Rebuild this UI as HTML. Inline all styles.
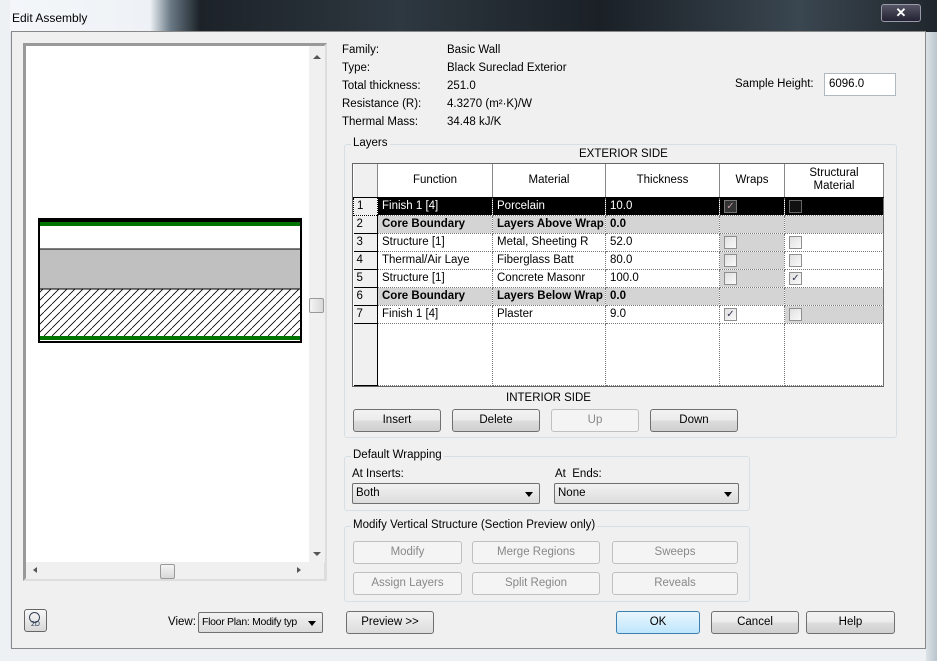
<!DOCTYPE html>
<html><head><meta charset="utf-8"><style>
*{box-sizing:border-box;margin:0;padding:0}
body{width:937px;height:661px;overflow:hidden;font-family:"Liberation Sans",sans-serif;font-size:11.5px;color:#000;background:#dfe6ee;position:relative}
.a{position:absolute;white-space:nowrap}
.btn{position:absolute;height:23px;border:1px solid #707070;border-radius:3px;background:linear-gradient(#f2f2f2 0%,#ebebeb 50%,#dddddd 51%,#cfcfcf 100%);text-align:center;line-height:21px}
.dis{border-color:#c0c0c0;background:#f4f4f4;color:#888}
.grp{position:absolute;border:1px solid #d5dfe5;border-radius:3px}
.gl{position:absolute;top:-8px;left:6px;background:#f0f0f0;padding:0 2px}
.cb{position:absolute;width:13px;height:13px;border:1px solid #8e8f8f;background:linear-gradient(135deg,#e0e0e0,#fafafa)}
.sel{position:absolute;height:21px;border:1px solid #707070;border-radius:2px;background:linear-gradient(#f2f2f2,#dcdcdc);padding-left:3px;line-height:19px}
.sel:after{content:"";position:absolute;right:6px;top:8px;border-left:4px solid transparent;border-right:4px solid transparent;border-top:5px solid #000}
table{border-collapse:collapse;position:absolute;left:353px;top:164px;width:530px;table-layout:fixed}
td{height:18px;border-right:1px dotted #777;border-bottom:1px dotted #777;padding-left:4px;white-space:nowrap;overflow:hidden;line-height:17px}
tr.b td{font-weight:bold;background:#d4d4d4}
tr.k td{background:#000;color:#fff}
td.g{background:#d4d4d4}
table tr td.h{border-right:1px solid #000;border-bottom:1px solid #000;background:#f0f0f0;padding-left:3px;font-weight:normal;color:#000}
th{font-weight:normal;height:33px;border-right:1px solid #888;border-bottom:1px solid #000;background:#fff;line-height:13px}
</style></head><body>
<div class="a" style="left:0;top:0;width:937px;height:32px;background:linear-gradient(90deg,#f4f7fa 0,#eef2f6 150px,#6c7c88 170px,#1c2228 200px,#2e3840 400px,#1a2026 600px,#3a4650 800px,#20262c 937px)"></div>
<div class="a" style="left:0;top:0;width:10px;height:661px;background:#eef1f4"></div>
<div class="a" style="left:0;top:648px;width:937px;height:13px;background:#eef1f4"></div>
<div class="a" style="left:926px;top:32px;width:11px;height:629px;background:linear-gradient(90deg,#dde3e8,#b9c4cc)"></div>
<div class="a" style="left:12px;top:11px;font-size:12px">Edit Assembly</div>
<div class="a" style="left:881px;top:4px;width:40px;height:18px;border:1px solid #99a;border-radius:3px;background:linear-gradient(#556,#223);color:#fff;text-align:center;font-weight:bold;line-height:16px;font-size:13px">✕</div>
<div class="a" style="left:11px;top:31px;width:915px;height:618px;background:#f0f0f0;border:1px solid #888"></div>
<div class="a" style="left:23px;top:43px;width:304px;height:538px;border:3px solid #999;border-right-color:#ddd;border-bottom-color:#ddd;background:#fff"></div>
<div class="a" style="left:309px;top:46px;width:16px;height:516px;background:#f0f0f0"></div>
<div class="a" style="left:313px;top:55px;border:4px solid transparent;border-bottom:4px solid #555;border-top:none"></div>
<div class="a" style="left:313px;top:552px;border:4px solid transparent;border-top:4px solid #555;border-bottom:none"></div>
<div class="a" style="left:309px;top:298px;width:15px;height:15px;border:1px solid #999;border-radius:2px;background:linear-gradient(90deg,#f4f4f4,#d8d8d8)"></div>
<div class="a" style="left:26px;top:562px;width:298px;height:17px;background:#f0f0f0"></div>
<div class="a" style="left:33px;top:567px;border:3px solid transparent;border-right:4px solid #555;border-left:none"></div>
<div class="a" style="left:297px;top:567px;border:3px solid transparent;border-left:4px solid #555;border-right:none"></div>
<div class="a" style="left:160px;top:564px;width:15px;height:15px;border:1px solid #999;border-radius:2px;background:linear-gradient(#f4f4f4,#d8d8d8)"></div>
<svg class="a" style="left:36px;top:216px" width="268" height="130">
<defs><pattern id="h" width="8" height="8" patternUnits="userSpaceOnUse"><path d="M0 8L8 0" stroke="#000" stroke-width="0.8"/></pattern></defs>
<rect x="3" y="2" width="262" height="124" fill="#fff"/>
<rect x="3" y="33" width="262" height="40" fill="#c0c0c0"/>
<rect x="3" y="73" width="262" height="47" fill="url(#h)"/>
<rect x="2" y="2" width="264" height="4" fill="#000"/>
<rect x="2" y="6" width="264" height="4" fill="#007400"/>
<rect x="2" y="120" width="264" height="4" fill="#007400"/>
<line x1="3" y1="33" x2="265" y2="33" stroke="#000"/>
<line x1="3" y1="73" x2="265" y2="73" stroke="#000"/>
<rect x="3" y="3" width="262" height="123" fill="none" stroke="#000" stroke-width="2"/>
</svg>
<div class="a" style="left:342px;top:41px;line-height:18px">Family:<br>Type:<br>Total thickness:<br>Resistance (R):<br>Thermal Mass:</div>
<div class="a" style="left:447px;top:41px;line-height:18px">Basic Wall<br>Black Sureclad Exterior<br>251.0<br>4.3270 (m²·K)/W<br>34.48 kJ/K</div>
<div class="a" style="left:735px;top:78px">Sample Height:</div>
<div class="a" style="left:824px;top:73px;width:72px;height:23px;border:1px solid #b0b8c0;background:#fff;padding:4px 4px">6096.0</div>
<div class="grp" style="left:344px;top:144px;width:553px;height:294px"><span class="gl">Layers</span></div>
<div class="a" style="left:579px;top:148px">EXTERIOR SIDE</div>
<div class="a" style="left:352px;top:163px;width:532px;height:224px;border:1px solid #666;background:#fff"></div>
<table>
<colgroup><col style="width:24px"><col style="width:115px"><col style="width:113px"><col style="width:114px"><col style="width:65px"><col style="width:99px"></colgroup>
<tr><th style="background:#f0f0f0"></th><th>Function</th><th>Material</th><th>Thickness</th><th>Wraps</th><th>Structural<br>Material</th></tr>
<tr class="k"><td class="h" style="border:1px dotted #000">1</td><td>Finish 1 [4]</td><td>Porcelain</td><td>10.0</td><td></td><td></td></tr>
<tr class="b"><td class="h">2</td><td>Core Boundary</td><td>Layers Above Wrap</td><td>0.0</td><td></td><td></td></tr>
<tr><td class="h">3</td><td>Structure [1]</td><td>Metal, Sheeting R</td><td>52.0</td><td class="g"></td><td></td></tr>
<tr><td class="h">4</td><td>Thermal/Air Laye</td><td>Fiberglass Batt</td><td>80.0</td><td class="g"></td><td></td></tr>
<tr><td class="h">5</td><td>Structure [1]</td><td>Concrete Masonr</td><td>100.0</td><td class="g"></td><td></td></tr>
<tr class="b"><td class="h">6</td><td>Core Boundary</td><td>Layers Below Wrap</td><td>0.0</td><td></td><td></td></tr>
<tr><td class="h">7</td><td>Finish 1 [4]</td><td>Plaster</td><td>9.0</td><td></td><td class="g"></td></tr>
<tr><td class="h" style="height:62px"></td><td style="height:62px"></td><td></td><td></td><td></td><td></td></tr>
</table>
<div class="cb" style="left:724px;top:200px;background:#333;border-color:#777;color:#b9a;font-size:10px;line-height:11px;text-align:center">✓</div>
<div class="cb" style="left:789px;top:200px;background:#111;border-color:#666"></div>
<div class="cb" style="left:724px;top:236px"></div><div class="cb" style="left:789px;top:236px"></div>
<div class="cb" style="left:724px;top:254px"></div><div class="cb" style="left:789px;top:254px"></div>
<div class="cb" style="left:724px;top:272px"></div><div class="cb" style="left:789px;top:272px;color:#335;font-size:10px;line-height:11px;text-align:center">✓</div>
<div class="cb" style="left:724px;top:308px;color:#335;font-size:10px;line-height:11px;text-align:center">✓</div><div class="cb" style="left:789px;top:308px"></div>
<div class="a" style="left:506px;top:392px">INTERIOR SIDE</div>
<div class="btn" style="left:353px;top:409px;width:88px">Insert</div>
<div class="btn" style="left:452px;top:409px;width:88px">Delete</div>
<div class="btn dis" style="left:551px;top:409px;width:88px">Up</div>
<div class="btn" style="left:650px;top:409px;width:88px">Down</div>
<div class="grp" style="left:344px;top:456px;width:406px;height:55px"><span class="gl">Default Wrapping</span></div>
<div class="a" style="left:352px;top:468px">At Inserts:</div>
<div class="a" style="left:555px;top:468px">At&nbsp; Ends:</div>
<div class="sel" style="left:352px;top:483px;width:188px">Both</div>
<div class="sel" style="left:554px;top:483px;width:185px">None</div>
<div class="grp" style="left:344px;top:526px;width:406px;height:76px"><span class="gl">Modify Vertical Structure (Section Preview only)</span></div>
<div class="btn dis" style="left:353px;top:541px;width:109px">Modify</div>
<div class="btn dis" style="left:472px;top:541px;width:128px">Merge Regions</div>
<div class="btn dis" style="left:612px;top:541px;width:126px">Sweeps</div>
<div class="btn dis" style="left:353px;top:572px;width:109px">Assign Layers</div>
<div class="btn dis" style="left:472px;top:572px;width:128px">Split Region</div>
<div class="btn dis" style="left:612px;top:572px;width:126px">Reveals</div>
<div class="a" style="left:24px;top:609px;width:23px;height:23px;border:1px solid #666;border-radius:3px;background:linear-gradient(#f8f8f8,#d8d8d8);font-size:7px;line-height:30px;text-align:center;color:#235">2D</div>
<div class="a" style="left:29px;top:612px;width:11px;height:11px;border:1.5px solid #345;border-radius:50%"></div>
<div class="a" style="left:168px;top:616px">View:</div>
<div class="sel" style="left:198px;top:612px;width:125px;font-size:10.5px;letter-spacing:-0.3px;overflow:hidden;padding-right:16px">Floor Plan: Modify typ</div>
<div class="btn" style="left:346px;top:611px;width:88px;background:linear-gradient(#f2f2f2,#dcdcdc)">Preview &gt;&gt;</div>
<div class="btn" style="left:616px;top:611px;width:84px;border-color:#3c7fb1;background:linear-gradient(#eaf6fd,#bee6fd)">OK</div>
<div class="btn" style="left:711px;top:611px;width:88px">Cancel</div>
<div class="btn" style="left:806px;top:611px;width:89px">Help</div>
</body></html>
